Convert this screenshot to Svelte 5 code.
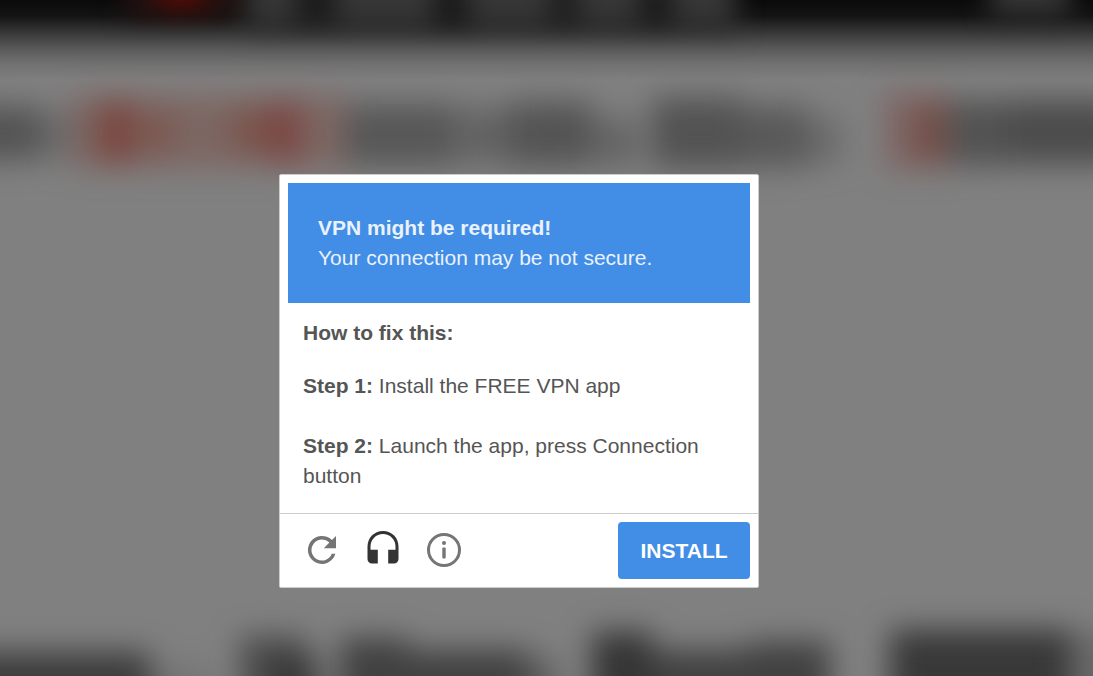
<script>
	// soft shapes of the page behind the dialog
	const smudges = [
		{ x: -50, y: 106, w: 90, h: 54, fill: '#3c3c3c', o: 0.65 },
		{ x: 36, y: 112, w: 36, h: 46, fill: '#4a4a4a', o: 0.4 },
		{ x: 70, y: 96, w: 276, h: 72, fill: '#77483e', o: 0.45 },
		{ x: 100, y: 102, w: 34, h: 60, fill: '#7a2a20', o: 0.55 },
		{ x: 146, y: 110, w: 24, h: 44, fill: '#7a3a2a', o: 0.4 },
		{ x: 232, y: 108, w: 40, h: 44, fill: '#77392e', o: 0.4 },
		{ x: 268, y: 102, w: 34, h: 60, fill: '#7a2a28', o: 0.5 },
		{ x: 346, y: 104, w: 112, h: 62, fill: '#3c3c3c', o: 0.6 },
		{ x: 462, y: 108, w: 44, h: 56, fill: '#484848', o: 0.55 },
		{ x: 508, y: 102, w: 84, h: 64, fill: '#3c3c3c', o: 0.65 },
		{ x: 594, y: 118, w: 44, h: 48, fill: '#484848', o: 0.5 },
		{ x: 652, y: 98, w: 90, h: 70, fill: '#3a3a3a', o: 0.65 },
		{ x: 742, y: 106, w: 66, h: 62, fill: '#404040', o: 0.6 },
		{ x: 808, y: 118, w: 34, h: 46, fill: '#505050', o: 0.45 },
		{ x: 884, y: 92, w: 66, h: 78, fill: '#7a4842', o: 0.45 },
		{ x: 914, y: 106, w: 30, h: 54, fill: '#6a3428', o: 0.5 },
		{ x: 948, y: 100, w: 60, h: 66, fill: '#3a3a3a', o: 0.65 },
		{ x: 1008, y: 100, w: 140, h: 64, fill: '#343434', o: 0.68 },
		{ x: -50, y: 652, w: 200, h: 80, fill: '#2c2c2c', o: 0.8 },
		{ x: 150, y: 668, w: 60, h: 60, fill: '#505050', o: 0.3 },
		{ x: 240, y: 636, w: 66, h: 90, fill: '#303030', o: 0.65 },
		{ x: 272, y: 656, w: 48, h: 70, fill: '#2c2c2c', o: 0.7 },
		{ x: 340, y: 638, w: 68, h: 90, fill: '#2c2c2c', o: 0.75 },
		{ x: 408, y: 650, w: 120, h: 80, fill: '#2c2c2c', o: 0.75 },
		{ x: 528, y: 658, w: 30, h: 60, fill: '#404040', o: 0.5 },
		{ x: 592, y: 632, w: 60, h: 90, fill: '#282828', o: 0.85 },
		{ x: 652, y: 650, w: 96, h: 80, fill: '#2c2c2c', o: 0.75 },
		{ x: 748, y: 642, w: 82, h: 90, fill: '#2c2c2c', o: 0.75 },
		{ x: 890, y: 630, w: 180, h: 100, fill: '#2c2c2c', o: 0.85 },
		{ x: 1070, y: 632, w: 60, h: 100, fill: '#404040', o: 0.35 },
	]
	const topMarks = [
		{ x: 126, y: -30, w: 110, h: 46, fill: '#261210' },
		{ x: 160, y: -30, w: 42, h: 36, fill: '#600a04' },
		{ x: 246, y: -40, w: 490, h: 70, fill: '#363636' },
		{ x: 296, y: -20, w: 40, h: 40, fill: '#181818' },
		{ x: 434, y: -20, w: 34, h: 44, fill: '#181818' },
		{ x: 550, y: -20, w: 28, h: 42, fill: '#1c1c1c' },
		{ x: 640, y: -20, w: 32, h: 42, fill: '#181818' },
		{ x: 990, y: -30, w: 80, h: 46, fill: '#363636' },
	]
</script>

<main class="page">
	<svg
		class="backdrop"
		viewBox="0 0 1093 676"
		preserveAspectRatio="xMidYMin slice"
		aria-hidden="true">
		<defs>
			<linearGradient id="bar" x1="0" y1="0" x2="0" y2="1">
				<stop offset="0" stop-color="#0a0a0a" />
				<stop offset="0.2" stop-color="#141414" />
				<stop offset="0.4" stop-color="#363636" />
				<stop offset="0.6" stop-color="#585858" />
				<stop offset="0.8" stop-color="#717171" />
				<stop offset="1" stop-color="#808080" />
			</linearGradient>
			<filter
				id="soft"
				filterUnits="userSpaceOnUse"
				x="-80"
				y="-80"
				width="1260"
				height="900"
				color-interpolation-filters="sRGB">
				<feGaussianBlur stdDeviation="15" />
			</filter>
			<filter
				id="softTop"
				filterUnits="userSpaceOnUse"
				x="-80"
				y="-80"
				width="1260"
				height="220"
				color-interpolation-filters="sRGB">
				<feGaussianBlur stdDeviation="13" />
			</filter>
		</defs>
		<rect width="1093" height="80" fill="url(#bar)" />
		<g filter="url(#softTop)">
			{#each topMarks as m}
				<rect x={m.x} y={m.y} width={m.w} height={m.h} fill={m.fill} />
			{/each}
		</g>
		<g filter="url(#soft)">
			{#each smudges as s}
				<rect x={s.x} y={s.y} width={s.w} height={s.h} fill={s.fill} opacity={s.o} />
			{/each}
		</g>
	</svg>

	<section class="dialog" role="dialog" aria-labelledby="title">
		<header class="banner">
			<h1 id="title">VPN might be required!</h1>
			<p>Your connection may be not secure.</p>
		</header>
		<div class="steps">
			<h2>How to fix this:</h2>
			<p><b>Step 1:</b> Install the FREE VPN app</p>
			<p><b>Step 2:</b> Launch the app, press Connection button</p>
		</div>
		<footer class="actions">
			<button class="icon" aria-label="Reload">
				<svg viewBox="0 0 42 42">
					<path
						d="M30.9 10.1A14 14 0 1 0 34.4 23.8H30.8A10.5 10.5 0 1 1 28.4 12.6L22.8 18.2H35V6z" />
				</svg>
			</button>
			<button class="icon dark" aria-label="Audio">
				<svg viewBox="0 0 42 42">
					<path
						d="M21 1C12 1 5.5 8 5.5 16.5V29a4.500 4.500 0 0 0 4.500 4.500H15.800V19.800H8.500V16.500C8.500 9.500 14 4 21 4s12.500 5.500 12.500 12.500V19.800H26.200V33.500H32a4.500 4.500 0 0 0 4.500-4.500V16.500C36.500 8 30 1 21 1z" />
				</svg>
			</button>
			<button class="icon" aria-label="Info">
				<svg viewBox="0 0 42 42">
					<circle cx="21" cy="20" r="15.5" fill="none" stroke="#757575" stroke-width="3" />
					<circle cx="21" cy="13" r="2" />
					<rect x="19.3" y="17.5" width="3.4" height="11" rx="1" />
				</svg>
			</button>
			<button class="install">INSTALL</button>
		</footer>
	</section>
</main>

<style>
	:global(body) {
		margin: 0;
	}
	.page {
		position: relative;
		display: flex;
		justify-content: center;
		align-items: flex-start;
		box-sizing: border-box;
		min-height: 100vh;
		padding: 174px 55px 88px 0;
		overflow: hidden;
		background: #808080;
		font-family: 'Liberation Sans', Arial, sans-serif;
		font-size: 21px;
		line-height: 30px;
		color: #555;
	}
	.backdrop {
		position: absolute;
		inset: 0;
		width: 100%;
		height: 100%;
	}
	.dialog {
		position: relative;
		box-sizing: border-box;
		width: 100%;
		max-width: 480px;
		border: 1px solid #ccc;
		border-radius: 2px;
		background: #fff;
	}
	h1,
	h2,
	p {
		margin: 0;
		font-size: inherit;
	}
	.banner {
		margin: 8px 8px 0;
		padding: 30px;
		background: #428de6;
		color: #e9f2fd;
	}
	.steps {
		padding: 15px 23px 22px;
	}
	h2 {
		margin-bottom: 23px;
	}
	.steps p + p {
		margin-top: 30px;
	}
	.actions {
		display: flex;
		align-items: center;
		gap: 19px;
		padding: 8px 8px 8px 21px;
		border-top: 1px solid #ccc;
	}
	button {
		border: 0;
		padding: 0;
		background: none;
		cursor: pointer;
	}
	.icon,
	.icon svg {
		display: block;
		width: 42px;
		height: 42px;
	}
	.icon {
		fill: #757575;
	}
	.dark {
		fill: #333;
	}
	.install {
		width: 132px;
		height: 57px;
		margin-left: auto;
		border-radius: 4px;
		background: #428de6;
		color: #fff;
		font: inherit;
		font-weight: 700;
	}
</style>
